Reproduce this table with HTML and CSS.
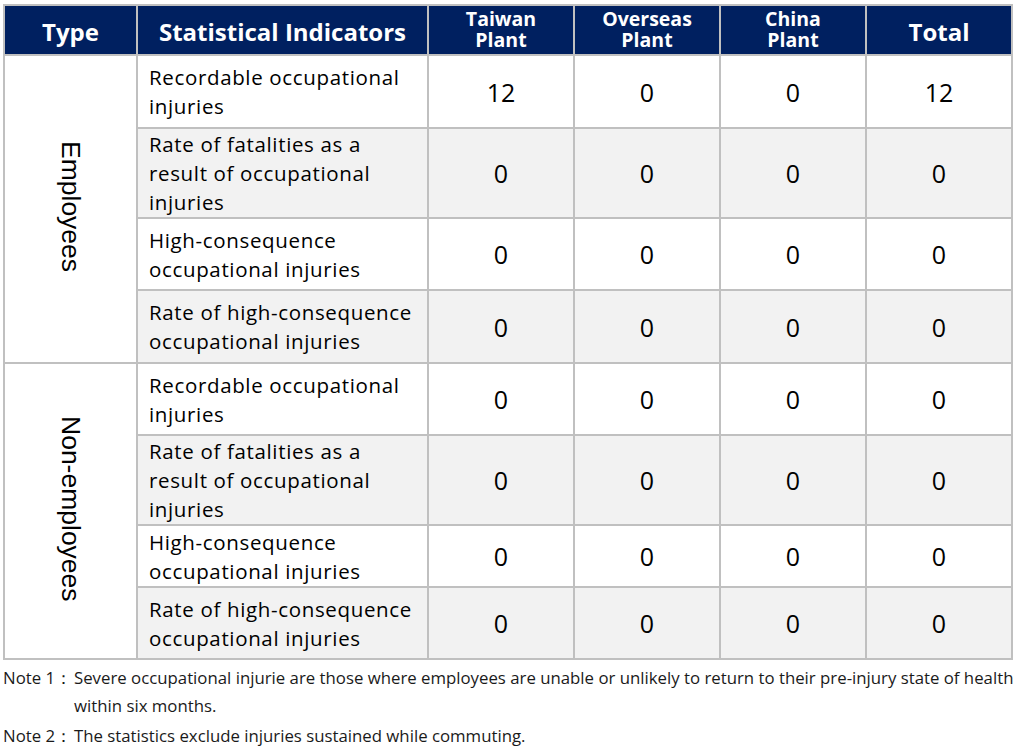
FILE: index.html
```html
<!DOCTYPE html>
<html lang="en">
<head>
<meta charset="utf-8">
<title>Occupational injuries</title>
<link rel="stylesheet" href="styles.css">
</head>
<body>
<table class="stats">
  <colgroup>
    <col class="c-type">
    <col class="c-ind">
    <col class="c-num">
    <col class="c-num">
    <col class="c-num">
    <col class="c-num">
  </colgroup>
  <thead>
    <tr>
      <th class="big">Type</th>
      <th class="big">Statistical Indicators</th>
      <th class="small">Taiwan<br>Plant</th>
      <th class="small">Overseas<br>Plant</th>
      <th class="small">China<br>Plant</th>
      <th class="big">Total</th>
    </tr>
  </thead>
  <tbody>
    <tr class="r1">
      <td class="type" rowspan="4"><span class="vert">Employees</span></td>
      <td class="ind">Recordable occupational<br>injuries</td>
      <td class="num">12</td><td class="num">0</td><td class="num">0</td><td class="num">12</td>
    </tr>
    <tr class="r2 alt">
      <td class="ind">Rate of fatalities as a<br>result of occupational<br>injuries</td>
      <td class="num">0</td><td class="num">0</td><td class="num">0</td><td class="num">0</td>
    </tr>
    <tr class="r3">
      <td class="ind">High-consequence<br>occupational injuries</td>
      <td class="num">0</td><td class="num">0</td><td class="num">0</td><td class="num">0</td>
    </tr>
    <tr class="r4 alt">
      <td class="ind">Rate of high-consequence<br>occupational injuries</td>
      <td class="num">0</td><td class="num">0</td><td class="num">0</td><td class="num">0</td>
    </tr>
    <tr class="r5">
      <td class="type" rowspan="4"><span class="vert">Non-employees</span></td>
      <td class="ind">Recordable occupational<br>injuries</td>
      <td class="num">0</td><td class="num">0</td><td class="num">0</td><td class="num">0</td>
    </tr>
    <tr class="r6 alt">
      <td class="ind">Rate of fatalities as a<br>result of occupational<br>injuries</td>
      <td class="num">0</td><td class="num">0</td><td class="num">0</td><td class="num">0</td>
    </tr>
    <tr class="r7">
      <td class="ind">High-consequence<br>occupational injuries</td>
      <td class="num">0</td><td class="num">0</td><td class="num">0</td><td class="num">0</td>
    </tr>
    <tr class="r8 alt">
      <td class="ind">Rate of high-consequence<br>occupational injuries</td>
      <td class="num">0</td><td class="num">0</td><td class="num">0</td><td class="num">0</td>
    </tr>
  </tbody>
</table>
<div class="notes">
  <p class="note"><span class="lbl">Note 1：</span><span class="txt">Severe occupational injurie are those where employees are unable or unlikely to return to their pre-injury state of health within six months.</span></p>
  <p class="note"><span class="lbl">Note 2：</span><span class="txt">The statistics exclude injuries sustained while commuting.</span></p>
</div>
</body>
</html>
```

FILE: styles.css
```css
html, body {
  margin: 0;
  padding: 0;
  background: #ffffff;
}
body {
  padding: 4px 0 0 3px;
  font-family: "Open Sans", "Noto Sans", "Liberation Sans", sans-serif;
  color: #000;
}
.stats {
  border-collapse: collapse;
  table-layout: fixed;
  width: 1010px;
  border: 2px solid #c0c0c0;
}
.c-type { width: 133px; }
.c-ind { width: 291px; }
.c-num { width: 146px; }
.stats th, .stats td {
  border: 2px solid #c0c0c0;
  padding: 0;
}
.stats thead tr { height: 50px; }
.stats th {
  background: #002060;
  color: #fff;
  font-weight: 700;
  text-align: center;
  vertical-align: middle;
}
.stats th.big { font-size: 24px; line-height: 30px; padding-top: 3px; }
.stats th.small { font-size: 19.5px; line-height: 21px; padding-bottom: 3px; }
.stats td { vertical-align: middle; background: #fff; }
.stats tr.alt td.ind, .stats tr.alt td.num { background: #f2f2f2; }
.stats td.type { text-align: center; background: #fff; }
.vert {
  writing-mode: vertical-rl;
  font-family: "Liberation Sans", Arial, sans-serif;
  font-size: 26.5px;
  display: inline-block;
}
.stats td.ind {
  font-size: 20.5px;
  letter-spacing: 0.65px;
  line-height: 29px;
  padding-left: 11px;
  padding-top: 1px;
  color: #000;
}
.stats td.num {
  font-size: 25px;
  text-align: center;
}
.r1 { height: 73px; }
.r2 { height: 90px; }
.r3 { height: 72px; }
.r4 { height: 73px; }
.r5 { height: 72px; }
.r6 { height: 90px; }
.r7 { height: 62px; }
.r8 { height: 72px; }
.notes {
  font-size: 16.8px;
  color: #1a1a1a;
  padding-top: 4px;
}
.note {
  margin: 0 0 2px 0;
  display: flex;
  line-height: 28px;
}
.lbl { flex: none; width: 71px; white-space: nowrap; }
.txt { flex: 1; }
```
